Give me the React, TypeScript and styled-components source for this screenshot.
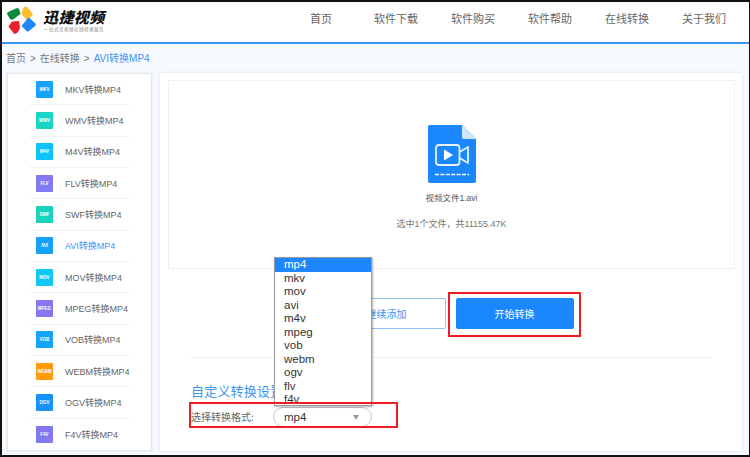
import React from "react";
import styled, { createGlobalStyle } from "styled-components";

const Global = createGlobalStyle`
  html, body { margin: 0; padding: 0; background: #000; }
  body { font-family: "Liberation Sans", "Noto Sans CJK SC", sans-serif; }
  * { box-sizing: border-box; }
`;
const Frame = styled.div`
  width: 750px; height: 457px; border: solid #111; border-width: 2px 1px 2px 2px;
  background: #f6fafe; overflow: hidden; display: flex; flex-direction: column;
`;
const Header = styled.header`
  height: 42px; flex: none; background: #fff; border-bottom: 2px solid #3a96f3;
  display: flex; align-items: center; justify-content: space-between; padding: 0 0 8px 4px;
`;
const Brand = styled.div`display: flex; align-items: center; gap: 7px; margin-top: 4px;`;
const BrandText = styled.div`display: flex; flex-direction: column; color: #111;`;
const BrandName = styled.div`
  font: italic 900 15px/18px "Noto Sans CJK SC", sans-serif; letter-spacing: .4px;
`;
const BrandSub = styled.div`
  font: 4.5px/6px "Noto Sans CJK SC", sans-serif; color: #888; letter-spacing: .5px; margin-left: 1px;
`;
const Nav = styled.nav`display: flex; gap: 33px; margin-right: 23px;`;
const NavItem = styled.a`
  font: 11px/14px "Noto Sans CJK SC", sans-serif; color: #666; width: 44px; text-align: center; white-space: nowrap;
  &:first-child { width: 22px; margin-right: 9px; }
`;
const Crumbs = styled.div`
  height: 29px; flex: none; display: flex; align-items: center; gap: 4px; padding: 1px 0 0 4px;
  font: 10px/14px "Liberation Sans", "Noto Sans CJK SC", sans-serif; color: #777;
`;
const CrumbNow = styled.span`color: #3e93f5;`;
const Body = styled.div`display: flex; gap: 8px; padding: 0 7px 0 5px; flex: 1; min-height: 0; position: relative;`;
const Side = styled.aside`
  width: 145px; height: 378px; background: #fff; border: 1px solid #e3e7ea; box-shadow: 0 0 2px #dde3e8;
  padding: 0 21px; display: flex; flex-direction: column;
`;
const SideItem = styled.div`
  height: 31.35px; flex: none; display: flex; align-items: center; gap: 12px; padding-left: 7px;
  border-bottom: 1px solid #f3f3f3;
  &:last-child { border-bottom: 0; }
`;
const Badge = styled.div<{ $bg: string }>`
  width: 17px; height: 17px; flex: none; border-radius: 1px; background: ${p => p.$bg}; color: #fff;
  font: 700 4.5px/17px "Liberation Sans", sans-serif; text-align: center; white-space: nowrap; overflow: hidden;
`;
const SideLabel = styled.span<{ $active?: boolean }>`
  font: 9px/14px "Liberation Sans", "Noto Sans CJK SC", sans-serif; white-space: nowrap; padding-top: 1px;
  color: ${p => (p.$active ? "#3e93f5" : "#666")};
`;
const Main = styled.main`
  flex: 1; height: 378px; background: #fff; box-shadow: 0 0 3px #d5dce2; border-radius: 2px;
  padding: 7px 7px 0 8px; display: flex; flex-direction: column; position: relative;
`;
const Drop = styled.div`
  height: 189px; flex: none; border: 1px dotted #dfe3e6; display: flex; flex-direction: column; align-items: center;
  padding-top: 44px;
`;
const FileName = styled.div`font: 8.5px/13px "Liberation Sans", "Noto Sans CJK SC", sans-serif; color: #555; margin-top: 9px;`;
const FileInfo = styled.div`font: 9px/13px "Liberation Sans", "Noto Sans CJK SC", sans-serif; color: #777; margin-top: 13px;`;
const Actions = styled.div`display: flex; justify-content: center; gap: 10px; margin-top: 29px; padding-right: 2px;`;
const Btn = styled.button<{ $primary?: boolean }>`
  width: 118px; height: 31px; border-radius: 2px; padding: 0;
  font: 10px/14px "Noto Sans CJK SC", sans-serif;
  border: 1px solid ${p => (p.$primary ? "#1a87ff" : "#8fc4fb")};
  background: ${p => (p.$primary ? "#1a87ff" : "#fff")};
  color: ${p => (p.$primary ? "#fff" : "#3e93f5")};
`;
const Rule = styled.div`height: 1px; background: #eeeeee; margin: 28px 23px 0 23px; flex: none;`;
const Settings = styled.section`padding-left: 23px; margin-top: 25px;`;
const SetTitle = styled.h3`
  margin: 0; font: 400 13px/16px "Noto Sans CJK SC", sans-serif; color: #3e93f5; letter-spacing: .2px;
`;
const SetRow = styled.div`display: flex; align-items: center; gap: 21px; margin-top: 8px;`;
const SetLabel = styled.span`font: 10px/14px "Noto Sans CJK SC", sans-serif; color: #666; white-space: nowrap; width: 61px;`;
const Select = styled.div`
  width: 99px; height: 20px; border: 1px solid #c8c8c8; border-radius: 10px; padding: 0 10px 1px;
  display: flex; align-items: center; justify-content: space-between;
  font: 11.5px/16px "Liberation Sans", sans-serif; color: #333; background: #fff;
`;
const Caret = styled.i`
  width: 0; height: 0; margin-right: 2px; margin-top: 2px;
  border: 3.5px solid transparent; border-top: 5px solid #999; border-bottom: 0;
`;
const Menu = styled.ul`
  position: absolute; left: 272px; top: 184px; width: 98px; height: 149px; margin: 0; padding: 0;
  list-style: none; overflow: hidden; background: #fff; border: 1px solid #9a9a9a; box-shadow: 1px 1px 2px rgba(0,0,0,.3);
  font: 11.5px/13.5px "Liberation Sans", sans-serif; color: #333;
`;
const MenuItem = styled.li<{ $sel?: boolean }>`
  height: 13.5px; padding-left: 9px;
  background: ${p => (p.$sel ? "#1e86ff" : "#fff")}; color: ${p => (p.$sel ? "#fff" : "#333")};
`;
const Callout = styled.div<{ $l: number; $t: number; $w: number; $h: number }>`
  position: absolute; left: ${p => p.$l}px; top: ${p => p.$t}px; width: ${p => p.$w}px; height: ${p => p.$h}px;
  border: 2px solid #f01c24; pointer-events: none;
`;

const Logo = () => (
  <svg width="30" height="30" viewBox="0 0 30 30">
    <path d="M1 9 Q1 7 3 6.5 L11 3 Q13 3 13.5 5 L14.5 9 L7 14.5 Q5 15 4 14 Z" fill="#0f8a3c" />
    <path d="M19 1.5 Q21 1 22 3 L26.5 8.5 Q27 10 26 11 L21 15 L15.5 9 L17 3.5 Z" fill="#fbbd2c" />
    <path d="M6 16.5 L13 16 L14 23 Q12 28 10 28.5 Q8.5 29.5 7.5 28 L2.5 21.5 Z" fill="#e8202c" />
    <path d="M22 13 Q23 12.5 24 13.5 L30 19 Q30 20.5 29 21 L23 26 Q21.5 27 20.5 26 L15.5 21 Z" fill="#1f88f5" />
  </svg>
);

const FileIcon = () => (
  <svg width="48" height="58" viewBox="0 0 48 58">
    <path d="M2 0 H34 L48 14 V56 Q48 58 46 58 H2 Q0 58 0 56 V2 Q0 0 2 0 Z" fill="#1a87ff" />
    <path d="M34 0 L48 14 H36 Q34 14 34 12 Z" fill="#cfe6fb" />
    <rect x="8" y="20" width="23.5" height="20" rx="3" fill="none" stroke="#e4f1ff" strokeWidth="1.8" />
    <path d="M16 24.5 L25 30 L16 35.5 Z" fill="#fff" />
    <path d="M31.5 27 L40 22 V38 L31.5 33" fill="none" stroke="#e4f1ff" strokeWidth="1.8" strokeLinejoin="round" />
    <path d="M7 49.5 H41" stroke="#fff" strokeWidth="1.3" strokeDasharray="4 1.4" />
  </svg>
);

const items: [string, string, string][] = [
  ["MKV", "#17a3fb", "MKV转换MP4"], ["WMV", "#18d5c5", "WMV转换MP4"], ["M4V", "#0cc3fb", "M4V转换MP4"],
  ["FLV", "#8178f2", "FLV转换MP4"], ["SWF", "#18d3bb", "SWF转换MP4"], ["AVI", "#15a0fb", "AVI转换MP4"],
  ["MOV", "#10c8f5", "MOV转换MP4"], ["MPEG", "#8578f0", "MPEG转换MP4"], ["VOB", "#14a4fb", "VOB转换MP4"],
  ["WEBM", "#ff9a0a", "WEBM转换MP4"], ["OGV", "#1593fb", "OGV转换MP4"], ["F4V", "#8178f2", "F4V转换MP4"],
];
const formats = ["mp4", "mkv", "mov", "avi", "m4v", "mpeg", "vob", "webm", "ogv", "flv", "f4v"];
const nav = ["首页", "软件下载", "软件购买", "软件帮助", "在线转换", "关于我们"];

export default function App() {
  return (
    <Frame>
      <Global />
      <Header>
        <Brand>
          <Logo />
          <BrandText>
            <BrandName>迅捷视频</BrandName>
            <BrandSub>一站式音视频在线转换服务</BrandSub>
          </BrandText>
        </Brand>
        <Nav>{nav.map(n => <NavItem key={n}>{n}</NavItem>)}</Nav>
      </Header>
      <Crumbs>
        <span>首页</span><span>&gt;</span><span>在线转换</span><span>&gt;</span><CrumbNow>AVI转换MP4</CrumbNow>
      </Crumbs>
      <Body>
        <Side>
          {items.map(([b, c, t]) => (
            <SideItem key={b}>
              <Badge $bg={c}>{b}</Badge>
              <SideLabel $active={b === "AVI"}>{t}</SideLabel>
            </SideItem>
          ))}
        </Side>
        <Main>
          <Drop>
            <FileIcon />
            <FileName>视频文件1.avi</FileName>
            <FileInfo>选中1个文件，共11155.47K</FileInfo>
          </Drop>
          <Actions>
            <Btn>继续添加</Btn>
            <Btn $primary>开始转换</Btn>
          </Actions>
          <Rule />
          <Settings>
            <SetTitle>自定义转换设置</SetTitle>
            <SetRow>
              <SetLabel>选择转换格式:</SetLabel>
              <Select>mp4<Caret /></Select>
            </SetRow>
          </Settings>
        </Main>
        <Menu>
          {formats.map((f, i) => <MenuItem key={f} $sel={i === 0}>{f}</MenuItem>)}
        </Menu>
        <Callout $l={446} $t={219} $w={133} $h={45} />
        <Callout $l={187} $t={329} $w={209} $h={26} />
      </Body>
    </Frame>
  );
}
